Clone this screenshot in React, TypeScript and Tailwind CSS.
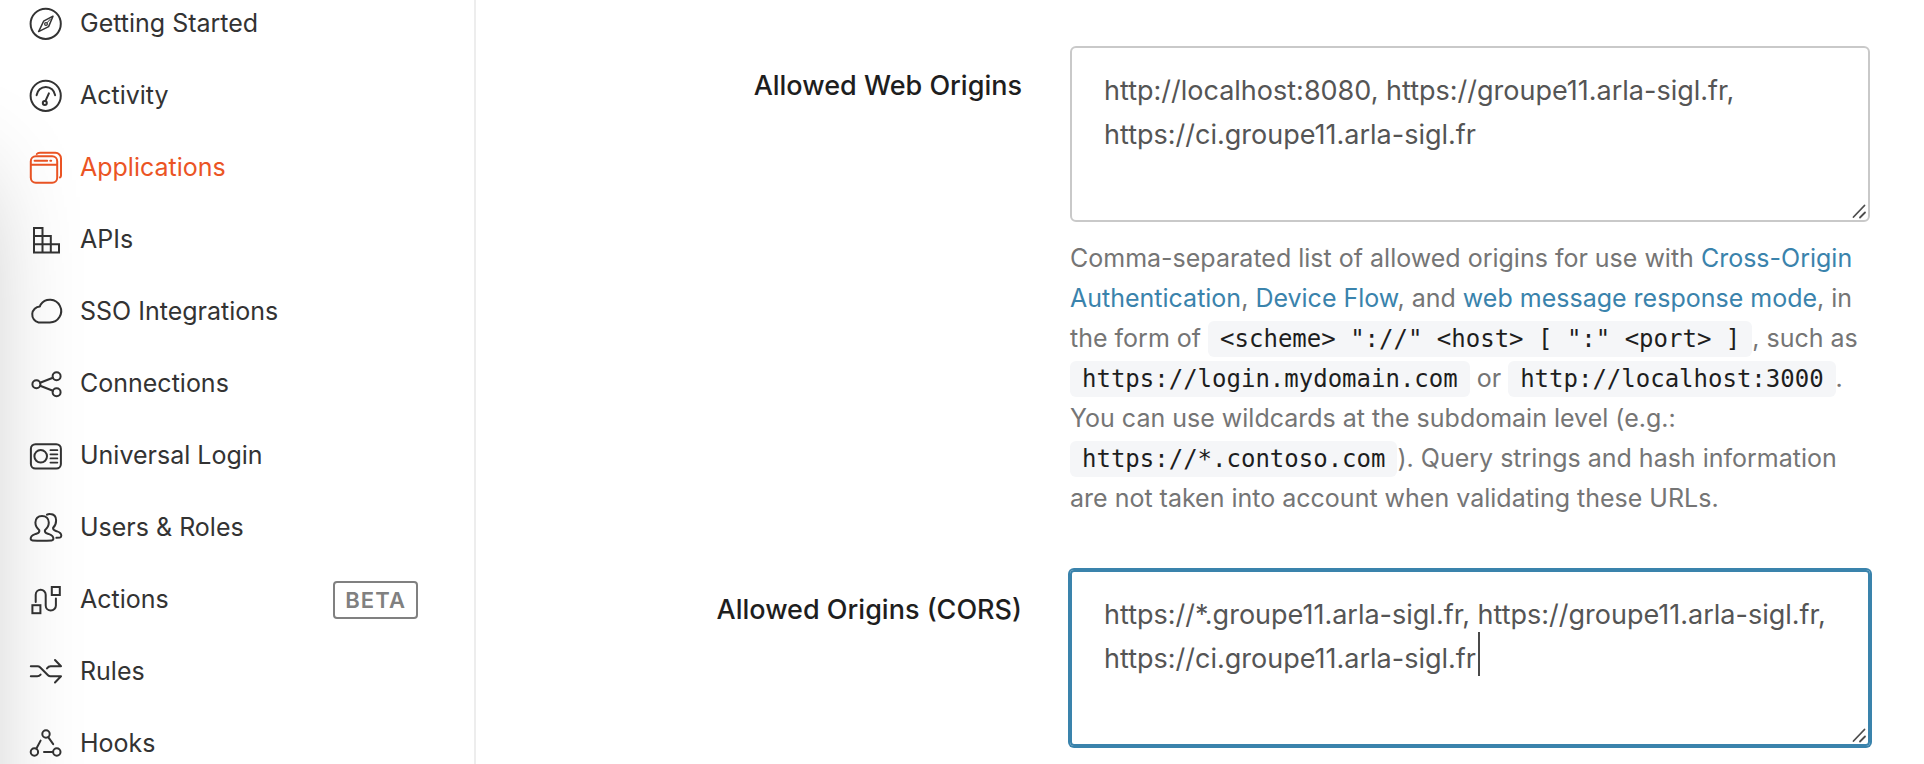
import { useEffect, useRef } from "react";
import type { ReactNode } from "react";

type NavItem = {
  label: string;
  icon: ReactNode;
  active?: boolean;
  badge?: string;
};

const navItems: NavItem[] = [
  {
    label: "Getting Started",
    icon: (
      <>
        <circle cx="15.7" cy="15.8" r="15.1" />
        <path d="M23 8.200 13.600 13.200 8.600 23.600 18.600 18.600Z" strokeWidth="1.5" />
        <circle cx="16" cy="16" r="1.4" strokeWidth="1.2" />
        <path d="M17.200 14.600 20.500 11" strokeWidth="1" />
      </>
    ),
  },
  {
    label: "Activity",
    icon: (
      <>
        <circle cx="15.7" cy="15.8" r="15.1" />
        <path d="M6.600 15.200C7.300 10.400 11 6.900 15.800 6.900s8.600 3.500 9.300 8.300" />
        <circle cx="14.8" cy="23" r="2" />
        <path d="M15.500 20.800 18.900 13.400" />
      </>
    ),
  },
  {
    label: "Applications",
    active: true,
    icon: (
      <>
        <rect x="0.8" y="4.2" width="26.4" height="26.6" rx="5" />
        <path d="M1 12.700H27M4.600 8.700H17.200M20.300 8.700h.9" />
        <path d="M6.800 2C7.600 1 9 .8 10 .8H25.400a5.600 5.600 0 0 1 5.600 5.600V23.400c0 1-.2 1.500-1 2" />
      </>
    ),
  },
  {
    label: "APIs",
    icon: <path strokeLinejoin="miter" d="M4 4H12.500V28.600H4ZM4 12H20.800V28.600M4 20.300H29V28.600H4" />,
  },
  {
    label: "SSO Integrations",
    icon: <path d="M8.600 26.400H19.800A11.300 11.300 0 1 0 10.600 8.600L9.900 10.400A8.100 8.100 0 0 0 8.600 26.400Z" />,
  },
  {
    label: "Connections",
    icon: (
      <>
        <circle cx="6.4" cy="16.3" r="4" />
        <circle cx="26.6" cy="8.2" r="4" />
        <circle cx="26.6" cy="24.3" r="4" />
        <path d="M10.100 14.800 22.900 9.700M10.100 17.800 22.900 22.800" />
      </>
    ),
  },
  {
    label: "Universal Login",
    icon: (
      <>
        <rect x="0.9" y="4.2" width="30" height="24.4" rx="4.6" />
        <circle cx="10.7" cy="16.3" r="6.3" />
        <path d="M20.400 10.200H27.400M20.400 14.300H27.400M20.400 18.400H27.400M20.400 22.600H27.400" strokeWidth="1.7" />
      </>
    ),
  },
  {
    label: "Users & Roles",
    icon: (
      <>
        <path d="M9.300 18.200C7 16.400 5.400 13.600 5.400 10.600 5.400 6.400 8 4 12 4s6.800 2.400 6.800 6.600c0 3-1.600 5.800-3.900 7.600-.6 3 1.500 3 4.200 3.900 3 1 4.300 2.200 4.300 4.500 0 1.400-.5 1.700-1.700 1.800-6.300.4-13 .4-19.200 0C1.200 28.300.7 28 .7 26.600c0-2.300 1.400-3.500 4.400-4.500 2.700-.9 4.800-.9 4.200-3.900Z" />
        <path d="M17 2.700C18 2.100 19.200 2 20.200 2.100c3.700.2 5.900 2.500 5.900 6.300 0 2.900-1.100 5.600-3 7.400-.5 2.500 1.300 2.800 4 3.600 2.900.9 4.200 2.100 4.200 4.300 0 1.100-.3 1.500-1.300 1.700l-3.600.4" />
      </>
    ),
  },
  {
    label: "Actions",
    badge: "BETA",
    icon: (
      <>
        <rect x="2.4" y="21.2" width="8" height="8" strokeLinejoin="miter" />
        <rect x="21.8" y="3" width="8" height="8" strokeLinejoin="miter" />
        <path d="M5.700 18V10.800a5 5 0 0 1 10 0V21.400a5.100 5.100 0 0 0 10.200 0V14.400" />
      </>
    ),
  },
  {
    label: "Rules",
    icon: (
      <>
        <path d="M.8 10.300H7.600Q9 10.300 10 11.300L18 19.300Q19 20.300 20.400 20.300H31L25 26.500" />
        <path d="M.8 20.300H7.200Q9.200 20.300 10.600 18.600M17 12.400Q18.600 10.300 20.600 10.300H31L25 4" />
      </>
    ),
  },
  {
    label: "Hooks",
    icon: (
      <>
        <circle cx="16" cy="6" r="3.7" />
        <circle cx="4.4" cy="24" r="3.7" />
        <circle cx="26.8" cy="24" r="3.7" />
        <path d="M10.600 12.600 6.400 20.500M18.200 9.200 23.200 16.200M14 24H22.800" />
      </>
    ),
  },
];

function SidebarLink({ item }: { item: NavItem }) {
  return (
    <li>
      <a
        href="#"
        className={
          item.active
            ? "flex h-12 items-center text-[25px] text-[#eb5424]"
            : "flex h-12 items-center text-[25px] text-[#333333]"
        }
      >
        <svg
          viewBox="0 0 32 32"
          className="mr-[18px] size-8 shrink-0 overflow-visible"
          fill="none"
          stroke="currentColor"
          strokeWidth="2"
          strokeLinecap="round"
          strokeLinejoin="round"
          aria-hidden="true"
        >
          {item.icon}
        </svg>
        <span>{item.label}</span>
        {item.badge && (
          <span className="ml-auto rounded-sm border-2 border-[#808080] px-[10px] text-[22px] leading-[34px] font-semibold tracking-wider text-[#808080]">
            {item.badge}
          </span>
        )}
      </a>
    </li>
  );
}

function ResizeGrip() {
  return (
    <svg
      viewBox="0 0 16 16"
      className="pointer-events-none absolute right-0.5 bottom-0.5 size-4"
      stroke="#4d4d4d"
      strokeWidth="1.8"
      strokeLinecap="round"
      aria-hidden="true"
    >
      <path d="M1.500 13 12.500 1.500M8 13.500 13 8.500" />
    </svg>
  );
}

function OriginsField({
  id,
  label,
  value,
  focused,
  children,
}: {
  id: string;
  label: string;
  value: string;
  focused?: boolean;
  children?: ReactNode;
}) {
  const ref = useRef<HTMLTextAreaElement>(null);

  useEffect(() => {
    if (focused && ref.current) {
      ref.current.focus();
      ref.current.setSelectionRange(value.length, value.length);
    }
  }, [focused, value]);

  return (
    <div className="grid grid-cols-[546fr_800fr] gap-12">
      <label htmlFor={id} className="pt-5 text-right text-[27px] leading-10 font-medium text-[#1e1e1e]">
        {label}
      </label>
      <div>
        <div className="relative">
          <textarea
            ref={ref}
            id={id}
            rows={3}
            defaultValue={value}
            spellCheck={false}
            className={
              focused
                ? "block h-44 w-full resize-none overflow-hidden rounded-sm border-2 border-[#3a83ac] px-8 pt-[21px] text-[27px] leading-[44px] text-[#555555] caret-transparent ring-2 ring-[#3a83ac] outline-none"
                : "block h-44 w-full resize-none overflow-hidden rounded-md border-2 border-[#c9c9c9] px-8 pt-[21px] text-[27px] leading-[44px] text-[#555555] outline-none"
            }
          />
          {focused && (
            <span className="pointer-events-none absolute top-[62px] left-[408px] h-11 w-0.5 bg-[#4a4a4a]" />
          )}
          <ResizeGrip />
        </div>
        {children}
      </div>
    </div>
  );
}

function Code({ children }: { children: ReactNode }) {
  return (
    <code className="rounded-md bg-[#f5f6f8] px-3 py-1 font-['DejaVu_Sans_Mono',monospace] text-2xl leading-7 text-[#1e1e1e]">
      {children}
    </code>
  );
}

function DocLink({ children }: { children: ReactNode }) {
  return (
    <a href="#" className="text-[#3a83ac]">
      {children}
    </a>
  );
}

export default function App() {
  return (
    <div className="relative flex h-screen overflow-hidden bg-white font-['Inter',sans-serif]">
      <div className="pointer-events-none absolute top-[180px] -bottom-40 -left-[130px] w-[100px] shadow-[0_0_110px_rgba(0,0,0,0.3)]" />
      <aside className="w-[476px] shrink-0 border-r-2 border-[#ededed] pr-14 pl-[30px]">
        <nav>
          <ul className="flex flex-col gap-6">
            {navItems.map((item) => (
              <SidebarLink key={item.label} item={item} />
            ))}
          </ul>
        </nav>
      </aside>
      <main className="flex flex-1 flex-col gap-[52px] pt-[46px] pr-[54px]">
        <OriginsField
          id="web-origins"
          label="Allowed Web Origins"
          value={"http://localhost:8080, https://groupe11.arla-sigl.fr,\nhttps://ci.groupe11.arla-sigl.fr"}
        >
          <p className="mt-4 text-[25px] leading-10 text-[#757575]">
            Comma-separated list of allowed origins for use with <DocLink>Cross-Origin</DocLink>
            <br />
            <DocLink>Authentication</DocLink>, <DocLink>Device Flow</DocLink>, and{" "}
            <DocLink>web message response mode</DocLink>, in
            <br />
            the form of <Code>{'<scheme> "://" <host> [ ":" <port> ]'}</Code>, such as
            <br />
            <Code>https://login.mydomain.com</Code> or <Code>http://localhost:3000</Code>.
            <br />
            You can use wildcards at the subdomain level (e.g.:
            <br />
            <Code>https://*.contoso.com</Code>). Query strings and hash information
            <br />
            are not taken into account when validating these URLs.
          </p>
        </OriginsField>
        <OriginsField
          id="cors-origins"
          label="Allowed Origins (CORS)"
          value={"https://*.groupe11.arla-sigl.fr, https://groupe11.arla-sigl.fr,\nhttps://ci.groupe11.arla-sigl.fr"}
          focused
        />
      </main>
    </div>
  );
}
